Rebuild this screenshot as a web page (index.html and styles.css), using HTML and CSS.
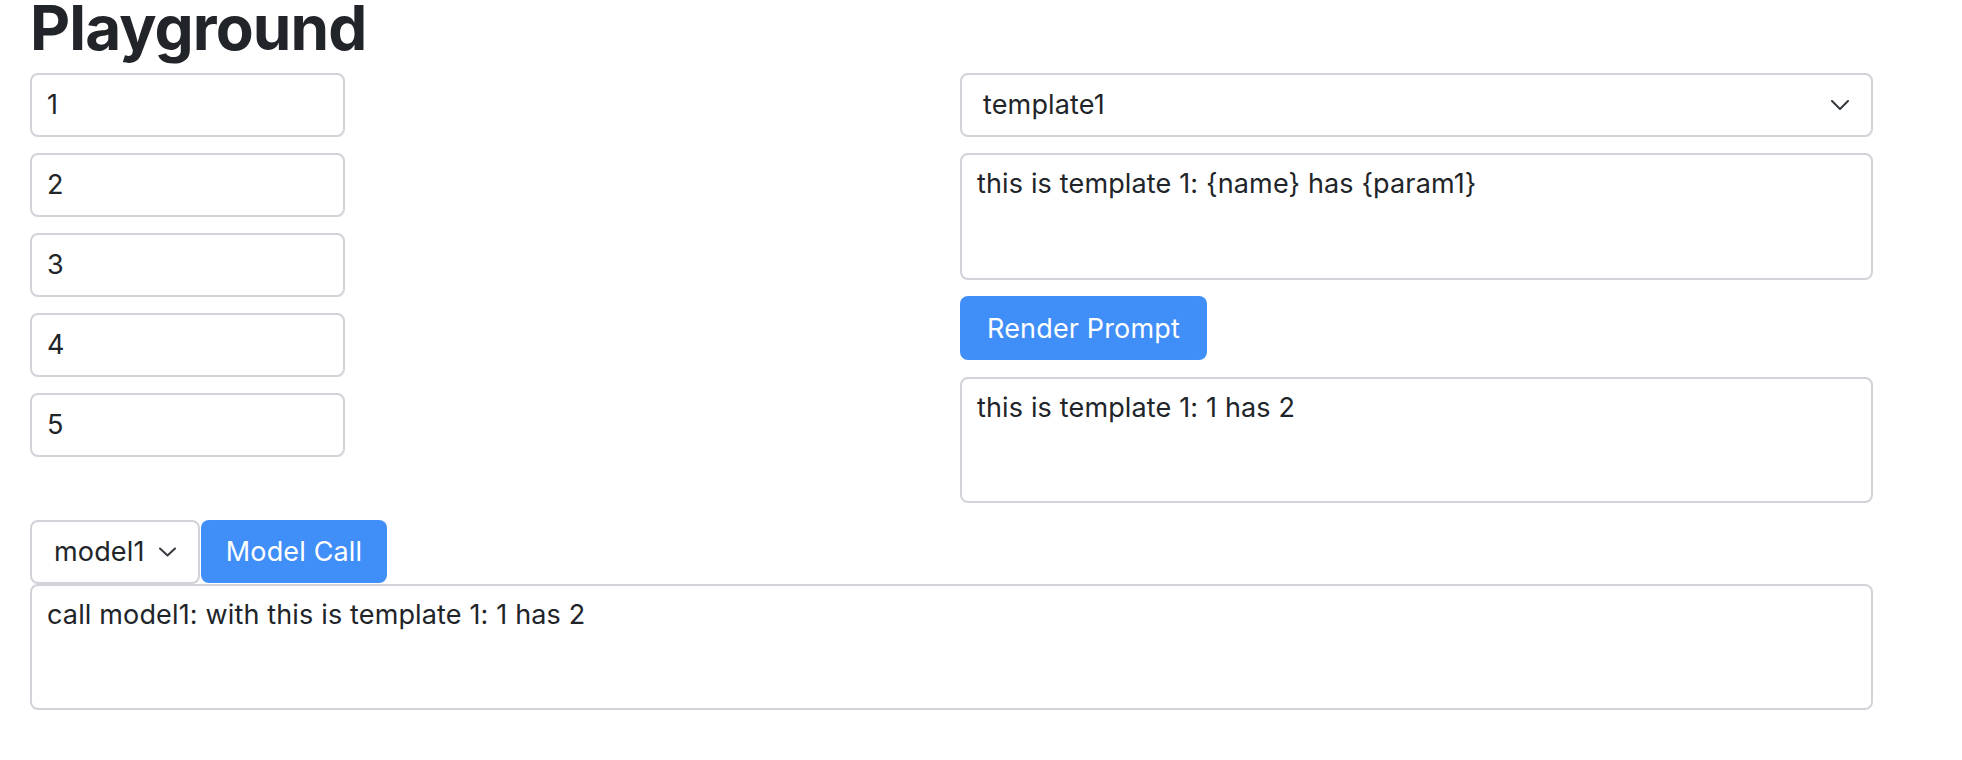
FILE: index.html
```html
<!DOCTYPE html>
<html lang="en">
<head>
<meta charset="utf-8">
<title>Playground</title>
<link rel="stylesheet" href="styles.css">
</head>
<body>
<main class="page">
  <h1 class="title">Playground</h1>
  <div class="top-grid">
    <div class="params">
      <input class="field" type="text" value="1">
      <input class="field" type="text" value="2">
      <input class="field" type="text" value="3">
      <input class="field" type="text" value="4">
      <input class="field" type="text" value="5">
    </div>
    <div class="prompt-col">
      <div class="select wide">
        <span class="select-text">template1</span>
        <svg class="chev" width="18" height="10" viewBox="0 0 18 10"><path d="M1 1 L9 9 L17 1" fill="none" stroke="#343a40" stroke-width="2" stroke-linecap="round" stroke-linejoin="round"/></svg>
      </div>
      <div class="area">this is template 1: {name} has {param1}</div>
      <button class="btn render">Render Prompt</button>
      <div class="area">this is template 1: 1 has 2</div>
    </div>
  </div>
  <div class="call-row">
    <div class="select small">
      <span class="select-text">model1</span>
      <svg class="chev" width="17" height="10" viewBox="0 0 17 10"><path d="M1 1.5 L8.5 8.5 L16 1.5" fill="none" stroke="#343a40" stroke-width="2" stroke-linecap="round" stroke-linejoin="round"/></svg>
    </div>
    <button class="btn">Model Call</button>
  </div>
  <div class="area result">call model1: with this is template 1: 1 has 2</div>
</main>
</body>
</html>
```
FILE: styles.css
```css
* { box-sizing: border-box; }
body {
  margin: 0;
  background: #fff;
  color: #212529;
  font-family: Inter, "Liberation Sans", sans-serif;
}
.page {
  width: 1873px;
  padding-left: 30px;
}
.title {
  margin: 0 0 17px;
  height: 56px;
  font-size: 62px;
  font-weight: 700;
  line-height: 56px;
  letter-spacing: -0.9px;
}
.top-grid {
  display: grid;
  grid-template-columns: 930px 1fr;
}
.params, .prompt-col {
  display: flex;
  flex-direction: column;
  gap: 16.5px;
  align-items: flex-start;
}
.field {
  width: 315px;
  height: 63.5px;
  border: 2px solid #d2d2d9;
  border-radius: 8px;
  padding: 0 15px;
  font: 27px Inter, "Liberation Sans", sans-serif;
  letter-spacing: 0.15px;
  color: #212529;
  background: #fff;
}
.select {
  height: 63.5px;
  border: 2px solid #d2d2d9;
  border-radius: 8px;
  display: flex;
  align-items: center;
  justify-content: space-between;
  font-size: 27px;
  letter-spacing: 0.15px;
  background: #fff;
}
.select.wide { width: 100%; padding: 0 22px 0 21px; }
.select.small { width: 170px; padding: 0 22px 0 22px; }
.area {
  width: 100%;
  height: 126.5px;
  border: 2px solid #d2d2d9;
  border-radius: 8px;
  padding: 11px 15px;
  font-size: 27px;
  letter-spacing: 0.15px;
  line-height: 36px;
}
.btn {
  height: 64px;
  border: none;
  border-radius: 8px;
  background: #408ef7;
  color: #fff;
  font: 27px Inter, "Liberation Sans", sans-serif;
  letter-spacing: 0.15px;
  padding: 0 24px;
}
.btn.render { width: 247px; padding: 0; }
.call-row {
  display: flex;
  gap: 1px;
  margin-top: 17px;
}
.call-row .btn { width: 186px; height: 63px; padding: 0; }
.result { margin-top: 0; width: 1843px; }
```
